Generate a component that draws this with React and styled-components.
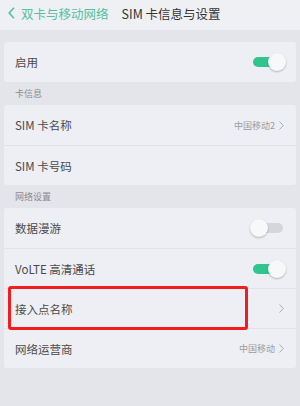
import styled, { createGlobalStyle } from "styled-components"

const GlobalStyle = createGlobalStyle`
body{
    margin:0;
    background:#e4e5ea;
    font-family:"Noto Sans CJK SC","Noto Sans",sans-serif;
}
`

const Page = styled.div`
width:300px;
height:406px;
background:#e4e5ea;
overflow:hidden;
`

const Header = styled.div`
height:30px;
box-sizing:border-box;
background:#eef0f4;
display:flex;
align-items:center;
padding:0 0 4px 8px;
`

const Back = styled.div`
display:flex;
align-items:center;
color:#55bfa2;
font-size:12.5px;
gap:6px;
margin-right:13px;
`

const Title = styled.div`
color:#333;
font-size:12.5px;
`

const Body = styled.div`
padding:12px 4px 0 4px;
display:flex;
flex-direction:column;
`

const Card = styled.div`
background:#eeeff4;
border-radius:3px;
display:flex;
flex-direction:column;
`

const Row = styled.div`
height:40px;
box-sizing:border-box;
display:flex;
align-items:center;
padding:0 12px 0 11px;
position:relative;
border-top:${props => props.first ? "none" : "1px solid #e2e3e8"};
`

const Label = styled.div`
flex:1;
color:#4a4a4a;
font-size:11.5px;
`

const Value = styled.div`
color:#9a9ba0;
font-size:9px;
display:flex;
align-items:center;
gap:4px;
`

const SectionTitle = styled.div`
color:#8a8b90;
font-size:9px;
line-height:12px;
padding:6px 0 5px 11px;
`

const Toggle = styled.div`
width:30px;
height:10px;
border-radius:5px;
background:${props => props.on ? "#2fc58f" : "#d5d6db"};
position:relative;
margin-right:1px;
`

const Knob = styled.div`
position:absolute;
top:-4px;
${props => props.on ? "right:-3px;" : "left:-3px;"}
width:18px;
height:18px;
border-radius:50%;
background:#f8f8fa;
box-shadow:0 1px 2px rgba(0,0,0,0.25);
`

const Highlight = styled.div`
position:absolute;
z-index:2;
left:4px;
top:-3px;
width:234px;
height:38px;
border:3px solid #f41c1c;
border-radius:3px;
`

const Chevron = () => (
    <svg width="5" height="9" viewBox="0 0 5 9">
        <path d="M0.5 0.5 L4.3 4.5 L0.5 8.5" fill="none" stroke="#a5a6ab" strokeWidth="0.9" />
    </svg>
)

const Switch = ({ on }) => (
    <Toggle on={on}>
        <Knob on={on} />
    </Toggle>
)

export default function App() {
    return (
        <Page>
            <GlobalStyle />
            <Header>
                <Back>
                    <svg width="7" height="12" viewBox="0 0 7 12">
                        <path d="M6 0.8 L1.2 6 L6 11.2" fill="none" stroke="#55bfa2" strokeWidth="1.6" />
                    </svg>
                    双卡与移动网络
                </Back>
                <Title>SIM 卡信息与设置</Title>
            </Header>
            <Body>
                <Card>
                    <Row first>
                        <Label>启用</Label>
                        <Switch on />
                    </Row>
                </Card>
                <SectionTitle>卡信息</SectionTitle>
                <Card>
                    <Row first>
                        <Label>SIM 卡名称</Label>
                        <Value>中国移动2 <Chevron /></Value>
                    </Row>
                    <Row>
                        <Label>SIM 卡号码</Label>
                    </Row>
                </Card>
                <SectionTitle>网络设置</SectionTitle>
                <Card>
                    <Row first>
                        <Label>数据漫游</Label>
                        <Switch />
                    </Row>
                    <Row>
                        <Label>VoLTE 高清通话</Label>
                        <Switch on />
                    </Row>
                    <Row>
                        <Label>接入点名称</Label>
                        <Value><Chevron /></Value>
                        <Highlight />
                    </Row>
                    <Row>
                        <Label>网络运营商</Label>
                        <Value>中国移动 <Chevron /></Value>
                    </Row>
                </Card>
            </Body>
        </Page>
    )
}
